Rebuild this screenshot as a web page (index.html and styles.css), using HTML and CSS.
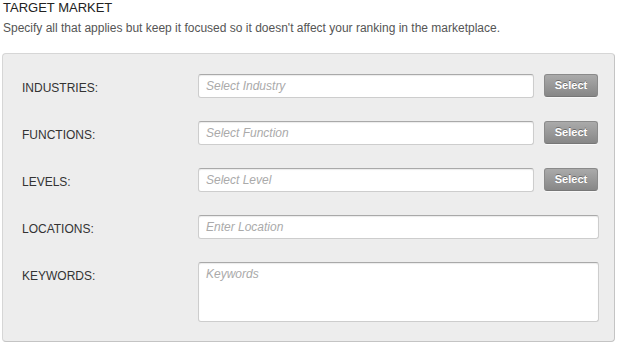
FILE: index.html
```html
<!DOCTYPE html>
<html>
  <head>
    <meta charset="utf-8">
    <title>Target market</title>
    <link rel="stylesheet" href="styles.css">
  </head>
  <body>
    <h3 class="section-title">TARGET MARKET</h3>
    <p class="section-hint">Specify all that applies but keep it focused so it doesn't affect your ranking in the marketplace.</p>
    <form class="panel">
      <div class="row">
        <label for="industry">INDUSTRIES:</label>
        <input type="text" id="industry" placeholder="Select Industry">
        <button type="button" class="btn">Select</button>
      </div>
      <div class="row">
        <label for="function">FUNCTIONS:</label>
        <input type="text" id="function" placeholder="Select Function">
        <button type="button" class="btn">Select</button>
      </div>
      <div class="row">
        <label for="level">LEVELS:</label>
        <input type="text" id="level" placeholder="Select Level">
        <button type="button" class="btn">Select</button>
      </div>
      <div class="row">
        <label for="location">LOCATIONS:</label>
        <input type="text" id="location" class="wide" placeholder="Enter Location">
      </div>
      <div class="row">
        <label for="keywords">KEYWORDS:</label>
        <textarea id="keywords" class="wide" placeholder="Keywords"></textarea>
      </div>
    </form>
  </body>
</html>
```

FILE: styles.css
```css
body {
  margin: 0;
  padding: 0 2px;
  font-family: "Liberation Sans", Arial, sans-serif;
  color: #333;
  background: #fff;
}
.section-title {
  margin: 0 0 0 1px;
  padding-top: 1px;
  font-size: 13px;
  font-weight: normal;
  line-height: 14px;
  color: #222;
}
.section-hint {
  margin: 5px 0 0 1px;
  font-size: 12px;
  line-height: 16px;
  color: #555;
}
.panel {
  margin-top: 17px;
  height: 289px;
  box-sizing: border-box;
  padding: 20px 15px 0 19px;
  background: #ededed;
  border: 1px solid #d6d6d6;
  border-right-color: #c4c4c4;
  border-bottom-color: #c4c4c4;
  border-radius: 4px;
}
.row {
  display: flex;
  align-items: flex-start;
  margin-bottom: 23px;
}
.row label {
  width: 176px;
  height: 24px;
  flex: none;
  box-sizing: border-box;
  padding-top: 2px;
  font-size: 12px;
  line-height: 24px;
  color: #333;
}
.row input,
.row textarea {
  box-sizing: border-box;
  width: 336px;
  height: 24px;
  margin: 0;
  padding: 0 7px;
  font-family: "Liberation Sans", Arial, sans-serif;
  font-size: 12px;
  color: #333;
  background: #fff;
  border: 1px solid #cdcdcd;
  border-top-color: #a9a9a9;
  border-radius: 3px;
  box-shadow: inset 0 1px 1px rgba(0, 0, 0, 0.08);
  outline: none;
}
.row .wide {
  width: 402px;
}
.row textarea {
  height: 60px;
  padding-top: 4px;
  resize: none;
}
.row input::placeholder,
.row textarea::placeholder {
  font-style: italic;
  color: #aaa;
}
.btn {
  margin-left: 10px;
  width: 54px;
  height: 23px;
  padding: 0 0 1px;
  font-family: "Liberation Sans", Arial, sans-serif;
  font-size: 11px;
  font-weight: bold;
  color: #fff;
  text-shadow: 0 -1px 0 rgba(0, 0, 0, 0.35);
  background: linear-gradient(#aaa, #878787);
  border: 1px solid #8a8a8a;
  border-bottom-color: #777;
  border-radius: 3px;
  box-shadow: 0 1px 0 rgba(255, 255, 255, 0.6);
  cursor: pointer;
}
```
